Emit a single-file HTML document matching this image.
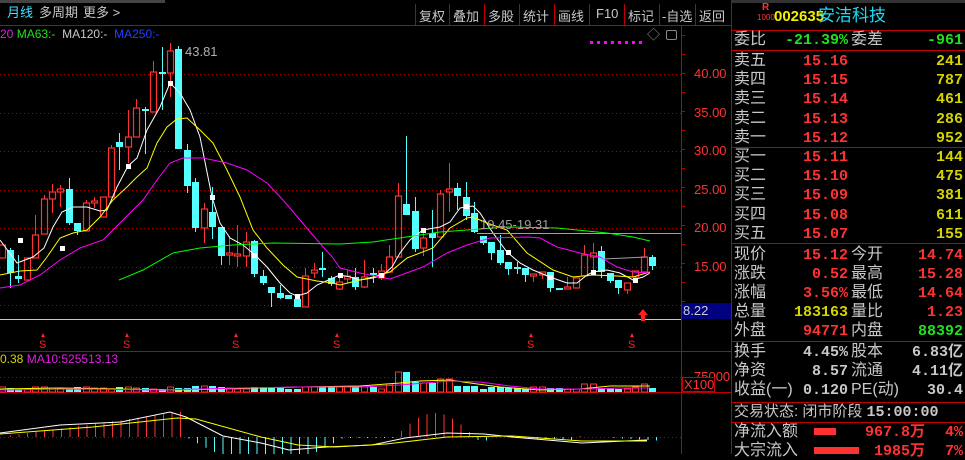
<!DOCTYPE html>
<html><head><meta charset="utf-8"><style>
*{margin:0;padding:0;box-sizing:border-box}
body{width:965px;height:454px;background:#000;overflow:hidden;position:relative;font-family:"Liberation Sans","Noto Sans CJK SC",sans-serif;color:#c0c0c0}
.t{position:absolute;white-space:nowrap;line-height:1}
.btn{position:absolute;top:6px;font-size:13px;color:#c8c8c8}
.lab{position:absolute;font-size:16px;color:#c8c8c8;line-height:1;white-space:nowrap}
.val{position:absolute;font-size:15px;font-weight:bold;line-height:1;text-align:right;white-space:nowrap;font-family:"Liberation Mono","Noto Sans CJK SC",monospace}
.r{color:#ff3232}.y{color:#d4d400}.g{color:#20e020}.w{color:#c8c8c8}
svg{position:absolute;left:0;top:0}
</style></head><body>
<svg id="s" width="965" height="454" viewBox="0 0 965 454"></svg>

<div class="t" style="left:0;top:0;width:165px;height:3px;background:#444"></div>
<div class="t" style="left:731px;top:0;width:234px;height:3px;background:#333"></div>
<div class="t" style="left:7px;top:6px;font-size:13px;color:#40e0ff">月线</div>
<div class="t" style="left:39px;top:6px;font-size:13px;color:#c8c8c8">多周期</div>
<div class="t" style="left:83px;top:6px;font-size:13px;color:#c8c8c8">更多 &gt;</div>
<div class="btn" style="left:419px">复权</div>
<div class="btn" style="left:453px">叠加</div>
<div class="btn" style="left:488px">多股</div>
<div class="btn" style="left:523px">统计</div>
<div class="btn" style="left:558px">画线</div>
<div class="btn" style="left:596px">F10</div>
<div class="btn" style="left:628px">标记</div>
<div class="btn" style="left:662px">-自选</div>
<div class="btn" style="left:699px">返回</div>

<div class="t" style="left:0;top:28px;font-size:12px"><span style="color:#e020e0">20</span> <span style="color:#20e020">MA63:-</span> <span style="color:#c8c8c8">&nbsp;MA120:-</span> <span style="color:#2040ff">&nbsp;MA250:-</span></div>
<div class="t" style="left:185px;top:45px;font-size:13px;color:#b0b0b0">43.81</div>
<div class="t" style="left:480px;top:218px;font-size:13px;color:#a0a0a0">19.45-19.31</div>
<div class="t" style="left:647px;top:28px;font-size:13px;color:#999">◇</div>
<div class="t" style="left:666px;top:30px;width:11px;height:10px;border:1px solid #888;border-radius:2px"></div>

<div class="t r" style="left:694px;top:67px;font-size:13px">40.00</div>
<div class="t r" style="left:694px;top:106px;font-size:13px">35.00</div>
<div class="t r" style="left:694px;top:144px;font-size:13px">30.00</div>
<div class="t r" style="left:694px;top:183px;font-size:13px">25.00</div>
<div class="t r" style="left:694px;top:221px;font-size:13px">20.00</div>
<div class="t r" style="left:694px;top:260px;font-size:13px">15.00</div>
<div class="t" style="left:682px;top:303px;width:49px;height:16px;background:#000080;color:#d0d0d0;font-size:13px;padding:1px 0 0 1px">8.22</div>
<div class="t r" style="left:694px;top:370px;font-size:13px">75000</div>
<div class="t r" style="left:682px;top:377px;width:33px;height:15px;background:#000;border:1px solid #c00;font-size:13px;padding:0 0 0 1px">X100</div>

<div class="t" style="left:0;top:353px;font-size:12px"><span style="color:#d4d400">0.38</span> <span style="color:#e020e0">MA10:525513.13</span></div>

<div class="t r" style="left:762px;top:3px;font-size:10px;font-weight:bold">R</div>
<div class="t r" style="left:757px;top:14px;font-size:8px">1000</div>
<div class="t" style="left:774px;top:9px;font-size:15px;font-weight:bold;color:#f0f000">002635</div>
<div class="t" style="left:818px;top:7px;font-size:17px;color:#20d8f0">安洁科技</div>

<div class="lab" style="left:734px;top:32px">委比</div>
<div class="val g" style="right:117px;top:33px">-21.39%</div>
<div class="lab" style="left:851px;top:32px">委差</div>
<div class="val g" style="right:2px;top:33px">-961</div>
<div id="ob"></div>

<div class="lab" style="left:734px;top:404px;font-size:15px">交易状态: 闭市阶段 <b style="font-family:'Liberation Mono',monospace;font-size:15px">15:00:00</b></div>
<div class="lab" style="left:734px;top:424px">净流入额</div>
<div class="t" style="left:814px;top:428px;width:22px;height:7px;background:#ff3232"></div>
<div class="val r" style="right:40px;top:425px">967.8万</div>
<div class="val r" style="right:2px;top:425px">4%</div>
<div class="lab" style="left:734px;top:443px">大宗流入</div>
<div class="t" style="left:814px;top:447px;width:45px;height:7px;background:#ff3232"></div>
<div class="val r" style="right:40px;top:444px">1985万</div>
<div class="val r" style="right:2px;top:444px">7%</div>

<script>
var ob=document.getElementById('ob'),h='';
function row(l1,v1,c1,y,l2,v2,c2){h+='<div class="lab" style="left:734px;top:'+(y-8)+'px">'+l1+'</div><div class="val '+c1+'" style="right:117px;top:'+(y-7)+'px">'+v1+'</div>';
if(l2)h+='<div class="lab" style="left:851px;top:'+(y-8)+'px">'+l2+'</div>';
h+='<div class="val '+c2+'" style="right:2px;top:'+(y-7)+'px">'+v2+'</div>';}
var s=[['卖五','15.16','241'],['卖四','15.15','787'],['卖三','15.14','461'],['卖二','15.13','286'],['卖一','15.12','952']];
s.forEach(function(a,i){row(a[0],a[1],'r',61+i*19.2,null,a[2],'y')});
var b=[['买一','15.11','144'],['买二','15.10','475'],['买三','15.09','381'],['买四','15.08','611'],['买五','15.07','155']];
b.forEach(function(a,i){row(a[0],a[1],'r',157+i*19.2,null,a[2],'y')});
row('现价','15.12','r',255,'今开','14.74','r');
row('涨跌','0.52','r',274,'最高','15.28','r');
row('涨幅','3.56%','r',293,'最低','14.64','r');
row('总量','183163','y',312,'量比','1.23','r');
row('外盘','94771','r',331,'内盘','88392','g');
row('换手','4.45%','w',352,'股本','6.83亿','w');
row('净资','8.57','w',371,'流通','4.11亿','w');
row('收益(一)','0.120','w',390,'PE(动)','30.4','w');
ob.innerHTML=h;

var S='';
function L(x1,y1,x2,y2,c,w,d){S+='<line x1="'+x1+'" y1="'+y1+'" x2="'+x2+'" y2="'+y2+'" stroke="'+c+'" stroke-width="'+(w||1)+'"'+(d?' stroke-dasharray="'+d+'"':'')+'/>';}
L(0,25.5,731,25.5,'#c00000');
[415,449,484,519,554,589,624,659,695].forEach(function(x){L(x+.5,4,x+.5,25,'#c00000')});
L(731.5,0,731.5,454,'#c00000');
L(681.5,26,681.5,454,'#c00000');
L(0,319.5,681,319.5,'#c8c8c8');
L(0,351.5,731,351.5,'#c00000');
L(0,392.5,731,392.5,'#c00000');
[30,50,147,243,341,402,422].forEach(function(y){L(731,y+.5,965,y+.5,'#c00000')});
[74,113,151,190,228,267,305].forEach(function(y){L(0,y+.5,681,y+.5,'#b00000',1,'1 3')});
L(0,377.5,681,377.5,'#b00000',1,'1 3');
L(0,437.5,681,437.5,'#b00000',1,'1 3');
for(var y=35;y<320;y+=19)L(681,y+.5,685,y+.5,'#c00000');
for(var x=590;x<642;x+=7)S+='<rect x="'+x+'" y="41" width="3" height="3" fill="#ff00ff"/>';
var C=[
['r',2,245,258],['c',10,250,273,248,288],['c',18,276,279,255,283],['r',27,258,280],['r',35,235,258,215,258],['r',44,199,234,195,234],['r',52,192,199,184,213],['r',60,189,192,185,207],['c',69,189,223,178,225],['c',77,223,231,223,235],['r',86,203,231,200,231],['r',94,201,203,197,208],['r',103,197,217],['r',111,148,197,145,197],['c',119,142,147,133,170],['r',128,137,147,110,163],['r',136,108,137,99,137],['c',145,109,111,107,154],['r',153,72,112,61,112],['c',162,72,74,47,110],['r',170,51,73,43,97],['c',178,49,149,46,149],['c',187,150,186,144,193],['c',195,182,228,178,232],['r',204,209,228,203,243],['c',212,212,227,187,239],['c',221,227,256,227,265],['r',229,253,255,236,265],['r',237,254,256,225,267],['r',246,242,256,232,267],['c',254,241,274,240,277],['c',263,276,283,270,285],['c',271,287,293,287,307],['c',280,293,298,285,299],['c',288,295,299],['c',297,299,307],['r',305,276,307,268,307],['r',314,270,273,263,278],['c',322,268,270,252,277],['c',331,278,284,276,286],['r',339,282,289,275,290],['r',347,276,279,270,283],['c',355,277,287,268,290],['r',364,277,287,260,288],['c',373,273,275,268,283],['r',381,271,278,264,280],['r',389,257,272,245,272],['r',398,196,257,183,257],['c',406,204,215,136,215],['c',415,211,249,197,252],['r',423,238,248,230,256],['c',432,233,238,210,267],['r',440,194,237,190,237],['r',449,189,192,163,212],['c',457,188,196,183,210],['c',466,197,216,182,220],['c',474,213,232,202,233],['c',483,236,243,236,245],['c',491,242,253,242,260],['c',500,250,263,235,265],['c',508,262,269,262,275],['c',517,267,269,262,274],['c',525,268,275,268,282],['r',533,274,276,274,282],['r',542,272,275,272,279],['c',550,272,288,272,292],['c',559,288,290],['r',567,287,289,277,289],['r',576,278,288],['r',584,255,276,245,276],['r',593,253,257,243,273],['c',601,251,272,246,278],['c',610,273,281,273,283],['c',618,280,288,280,294],['r',627,283,290,283,294],['r',635,271,277,271,282],['r',644,257,272,248,272],['c',652,257,266,255,270]];
function vh(x){if(x>=398&&x<=410)return 20;if(x>=411&&x<=418)return 10;if(x>=436&&x<=452)return 13;if(x>=419&&x<=435)return 9;if(x>=385&&x<=395)return 8;if(x>=580&&x<=598)return 8;if(x>=640&&x<=648)return 8;if(x>=300&&x<=380)return 5;if(x>=455&&x<=480)return 6;if(x>=190&&x<=215)return 6;if(x>=30&&x<=50)return 5;return 3+((x*7)%3);}
C.forEach(function(c){
 var col=c[0]=='r'?'#ff3232':'#54ffff',x=c[1],t=c[2],b=c[3],wt=c[4]||t,wb=c[5]||b;
 if(b-t<2){b=t+1.5}
 L(x+.5,wt,x+.5,t,col);L(x+.5,b,x+.5,wb,col);
 if(c[0]=='r')S+='<rect x="'+(x-2.5)+'" y="'+t+'" width="6" height="'+(b-t)+'" fill="none" stroke="'+col+'" stroke-width="1.2"/>';
 else S+='<rect x="'+(x-3)+'" y="'+t+'" width="7" height="'+(b-t)+'" fill="'+col+'"/>';
 var v=vh(x);
 if(c[0]=='r')S+='<rect x="'+(x-2.5)+'" y="'+(392-v)+'" width="6" height="'+v+'" fill="none" stroke="'+col+'"/>';
 else S+='<rect x="'+(x-3)+'" y="'+(392-v)+'" width="7" height="'+v+'" fill="'+col+'"/>';
});
function P(pts,c,w){S+='<polyline points="'+pts+'" fill="none" stroke="'+c+'" stroke-width="'+(w||1)+'"/>';}
P('0,240 17,263 33,257 44,248 53,227 62,212 73,207 87,207 100,211 107,210 117,187 128,166 137,158 147,130 160,107 170,83 180,93 190,110 200,137 212,197 220,223 230,238 243,245 255,255 267,267 280,283 290,293 297,296 307,293 317,285 333,278 340,275 350,277 360,280 373,278 383,275 392,267 400,253 410,240 423,230 440,227 450,222 460,208 473,206 480,213 493,233 507,252 520,263 533,270 550,277 567,283 577,283 587,275 593,272 607,270 620,273 633,280 643,277 650,273','#ffffff');
P('0,275 20,271 37,270 47,257 60,238 73,233 87,230 100,217 113,200 127,187 137,177 147,168 157,143 167,127 177,119 187,118 200,130 213,143 227,170 240,197 253,230 267,248 283,265 297,277 317,281 333,283 340,285 360,280 373,277 390,272 407,258 433,248 450,228 467,218 473,217 487,223 507,230 527,253 553,270 573,277 593,275 617,276 633,277 650,272','#ffff00');
P('0,288 20,285 40,275 60,260 80,248 103,240 123,220 143,200 157,180 170,163 183,158 203,158 227,163 247,170 267,183 283,200 300,220 317,240 333,258 340,268 360,273 390,279 423,267 447,253 467,245 490,238 527,237 540,238 557,247 580,253 600,257 617,267 633,272 650,273','#ff00ff');
P('119,280 143,270 173,253 200,248 233,245 273,243 340,244 373,242 440,232 507,227 557,228 607,233 633,237 650,241','#00ff00');
L(477,233.5,681,233.5,'#a0a0a0');L(603,259,647,257,'#a0a0a0');
[[20,240],[62,248],[128,166],[170,83],[212,197],[254,255],[297,296],[340,275],[381,275],[423,230],[466,206],[508,252],[550,277],[593,272],[635,280]].forEach(function(p){S+='<rect x="'+(p[0]-2)+'" y="'+(p[1]-2)+'" width="5" height="5" fill="#fff"/>'});
P('0,389 60,388 120,389 180,390 220,389 260,388 300,387 360,386 400,383 420,381 450,380 470,383 500,387 540,390 580,389 610,386 650,386','#ffff00');
P('0,390 80,389 160,390 240,388 300,387 360,387 400,385 450,381 480,382 510,386 540,389 590,389 620,388 650,388','#ff00ff');
[43,127,236,337,531,632].forEach(function(x){S+='<polygon points="'+(x-2)+',337 '+(x+2)+',337 '+x+',333" fill="#ff2020"/><text x="'+(x-4)+'" y="348" font-size="11" fill="#ff2020" font-family="Liberation Sans">S</text>'});
S+='<polygon points="643,309 638,315 641,315 641,321 645,321 645,315 648,315" fill="#ff2020"/>';
for(var x=2;x<660;x+=8.5){var v;
 if(x<186)v=-(x/186)*26;else if(x<345)v=Math.sin((x-186)/159*Math.PI)*28;else if(x<395)v=1;else if(x<475)v=-Math.sin((x-395)/80*Math.PI)*24;else v=((x*3)%5)-1;
 if(Math.abs(v)<0.8)continue;
 L(x,437,x,437+v,v<0?'#ff3232':'#54ffff');}
P('0,433 60,425 121,422 170,412 186,417 223,436 261,443 289,450 326,447 372,445 405,438 447,433 484,434 512,437 559,441 582,443 647,440','#ffffff');
P('0,434 93,427 177,418 196,419 261,437 298,445 335,447 386,444 447,437 512,436 582,441 647,441','#ffff00');
document.getElementById('s').innerHTML=S;
</script>
</body></html>
